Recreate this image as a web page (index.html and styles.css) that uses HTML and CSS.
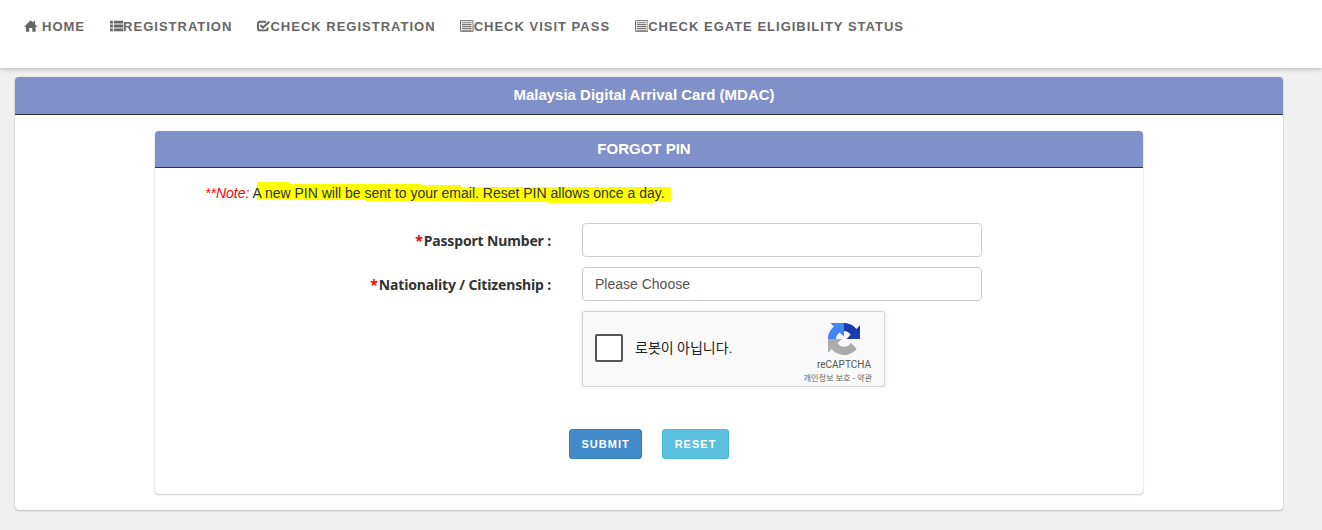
FILE: index.html
```html
<!DOCTYPE html>
<html lang="en">
<head>
    <meta charset="UTF-8">
    <meta name="viewport" content="width=device-width, initial-scale=1.0">
    <title>Malaysia Digital Arrival Card (MDAC)</title>
    <link rel="stylesheet" href="styles.css">
</head>
<body>

<!-- top menu -->
<nav class="top-nav">
    <a class="nav-link nav-home" href="#">
        <svg class="nav-icon" viewBox="0 0 14 14"><path d="M7 1 L9.6 3.5 V1.8 H11.4 V5.2 L14 7.8 H12 V13 H8.6 V9 H5.4 V13 H2 V7.8 H0 Z"/></svg>
        HOME
    </a>
    <a class="nav-link" href="#">
        <svg class="nav-icon" viewBox="0 0 14 14"><path d="M0 1.5h3v3h-3zM4 1.5h10v3h-10zM0 5.5h3v3h-3zM4 5.5h10v3h-10zM0 9.5h3v3h-3zM4 9.5h10v3h-10z"/></svg>
        REGISTRATION
    </a>
    <a class="nav-link" href="#">
        <svg class="nav-icon" viewBox="0 0 14 14"><path d="M11 8.2 V9.5 A2 2 0 0 1 9 11.5 H3 A2 2 0 0 1 1 9.500 V4.500 A2 2 0 0 1 3 2.500 H9.500" fill="none" stroke="#666" stroke-width="2"/><path d="M3.500 6 L6.200 8.700 L12.800 2.500" fill="none" stroke="#666" stroke-width="2.200"/></svg>
        CHECK REGISTRATION
    </a>
    <a class="nav-link" href="#">
        <svg class="nav-icon" viewBox="0 0 14 14"><path d="M.5 1.5h13v11H.5z" fill="none" stroke="#666"/><path d="M2 3h10v1.2H2zM2 5h10v1.2H2zM2 7h10v1.2H2zM2 9h10v1.2H2zM2 10.800h10V12H2z" fill="#777"/></svg>
        CHECK VISIT PASS
    </a>
    <a class="nav-link" href="#">
        <svg class="nav-icon" viewBox="0 0 14 14"><path d="M.5 1.5h13v11H.5z" fill="none" stroke="#666"/><path d="M2 3h10v1.2H2zM2 5h10v1.2H2zM2 7h10v1.2H2zM2 9h10v1.2H2zM2 10.800h10V12H2z" fill="#777"/></svg>
        CHECK EGATE ELIGIBILITY STATUS
    </a>
</nav>

<main class="panel panel-outer">
    <div class="panel-heading heading-main">Malaysia Digital Arrival Card (MDAC)</div>
    <div class="panel-body">

        <section class="panel panel-inner">
            <div class="panel-heading heading-forgot">FORGOT PIN</div>

            <p class="note">
                <!-- highlighter mark behind the note -->
                <svg class="note-mark" viewBox="0 0 520 40" width="520" height="40"><polygon fill="#ffff00" points="102,14 134,14 134,16 186,16 186,16 266,16 266,17 306,17 306,19 516,19 516,34 498,34 498,35 392,35 392,34 306,34 306,33 211,33 211,32 149,32 149,31 111,31 102,31"/></svg>
                <span class="note-text"><em class="note-label">**Note:</em> A new PIN will be sent to your email. Reset PIN allows once a day.</span>
            </p>

            <form class="forgot-form">
                <label class="form-label" for="passportNo"><span class="required">*</span>Passport Number :</label>
                <input id="passportNo" class="form-control" type="text">

                <label class="form-label" for="nationality"><span class="required">*</span>Nationality / Citizenship :</label>
                <select id="nationality" class="form-control">
                    <option>Please Choose</option>
                </select>

                <div class="recaptcha-box">
                    <span class="recaptcha-check"></span>
                    <span class="recaptcha-text">로봇이 아닙니다.</span>
                    <div class="recaptcha-brand">
                        <svg class="recaptcha-logo" viewBox="0 0 64 64">
                            <path fill="#1c3aa9" d="M64 32V4.7l-7.2 7.1C50.9 4.7 42 0 32 0v16c5.5 0 10.4 3 13.2 7.5L37 32z"/>
                            <path fill="#4285f4" d="M32 0H4.7l7.1 7.2C4.7 13.1 0 22 0 32h16c0-5.5 3-10.4 7.5-13.2L32 27z"/>
                            <path fill="#ababab" d="M0 32v27.3l7.2-7.1C13 59.3 22 64 32 64c10.4 0 19.6-5 25.4-12.7L45.7 39.5c-1.2 2.1-2.8 3.9-4.8 5.3-2 1.6-4.9 2.9-8.9 2.9-.5 0-.9 0-1.1-.1-5-.4-9.3-3.2-11.8-7.1L27.4 32z"/>
                        </svg>
                        <span class="recaptcha-name">reCAPTCHA</span>
                        <span class="recaptcha-links">개인정보 보호 - 약관</span>
                    </div>
                </div>
            </form>

            <div class="form-actions">
                <button type="button" class="btn btn-submit">SUBMIT</button>
                <button type="button" class="btn btn-reset">RESET</button>
            </div>
        </section>

    </div>
</main>

</body>
</html>
```

FILE: styles.css
```css
body {
    font-family: "Liberation Sans", Arial, sans-serif;
    background-color: #f0f0f0;
    margin: 0;
    color: #333333;
}

/* top menu */
.top-nav {
    display: flex;
    gap: 24.6px;
    height: 68px;
    box-sizing: border-box;
    padding: 18px 0 0 24px;
    background-color: #ffffff;
    box-shadow: 0 1px 5px rgba(0,0,0,0.25);
}

.nav-link {
    display: flex;
    align-items: center;
    height: 16px;
    font-size: 13px;
    font-weight: bold;
    letter-spacing: 1px;
    color: #666666;
    text-decoration: none;
    white-space: nowrap;
}

.nav-icon {
    width: 13.5px;
    height: 14px;
    fill: #666666;
}

.nav-home .nav-icon {
    margin-right: 4.5px;
}

/* panels */
.panel {
    background-color: #ffffff;
    border-radius: 4px;
    box-shadow: 0 1px 2px rgba(0,0,0,0.2), 0 0 1px rgba(0,0,0,0.3);
    box-sizing: border-box;
}

.panel-outer {
    margin: 9px 39px 20px 15px;
    height: 433px;
}

.panel-inner {
    width: 988px;
    height: 363px;
    margin-left: 140px;
}

.panel-heading {
    background-color: #8090c9;
    color: #ffffff;
    font-size: 15px;
    font-weight: bold;
    text-align: center;
    padding-right: 10px;
    border-bottom: 1px solid #333333;
    border-radius: 4px 4px 0 0;
    box-sizing: border-box;
}

.heading-main {
    height: 38px;
    line-height: 36px;
}

.heading-forgot {
    height: 37px;
    line-height: 35px;
}

.panel-body {
    padding-top: 16px;
}

/* note */
.note {
    position: relative;
    margin: 0;
    height: 55px;
    padding-left: 50px;
    font-size: 14px;
    line-height: 50px;
    box-sizing: border-box;
}

.note-mark {
    position: absolute;
    left: 0;
    top: 0;
}

.note-text {
    position: relative;
}

.note-label {
    color: #ff0000;
}

/* form */
.forgot-form {
    display: grid;
    grid-template-columns: 396px 400px;
    column-gap: 31px;
    row-gap: 10px;
    align-items: center;
}

.form-label {
    font-family: "Noto Sans", sans-serif;
    font-size: 14px;
    font-weight: bold;
    letter-spacing: -0.15px;
    text-align: right;
    color: #333333;
}

.required {
    color: #ff0000;
    margin-right: 1px;
}

.form-control {
    height: 34px;
    width: 400px;
    box-sizing: border-box;
    padding: 0 12px;
    border: 1px solid #cccccc;
    border-radius: 4px;
    background-color: #ffffff;
    font-family: "Liberation Sans", Arial, sans-serif;
    font-size: 14px;
    color: #555555;
    appearance: none;
}

/* recaptcha */
.recaptcha-box {
    grid-column: 2;
    display: flex;
    align-items: center;
    width: 303px;
    height: 76px;
    box-sizing: border-box;
    padding: 0 12px 2px;
    background-color: #f9f9f9;
    border: 1px solid #d3d3d3;
    border-radius: 3px;
    box-shadow: 0 0 4px 1px rgba(0,0,0,0.08);
}

.recaptcha-check {
    width: 28px;
    height: 28px;
    box-sizing: border-box;
    border: 2px solid #555555;
    border-radius: 2px;
    background-color: #ffffff;
}

.recaptcha-text {
    margin: 0 0 2px 12px;
    font-family: Roboto, "Noto Sans CJK KR", sans-serif;
    font-size: 14px;
    color: #222222;
}

.recaptcha-brand {
    display: flex;
    flex-direction: column;
    align-items: flex-end;
    margin-left: auto;
    width: 70px;
    padding-top: 10px;
}

.recaptcha-logo {
    width: 32px;
    height: 32px;
    margin-right: 12px;
}

.recaptcha-name {
    margin: 3px 1px 0 0;
    font-family: Roboto, sans-serif;
    font-size: 10px;
    line-height: 14px;
    color: #555555;
}

.recaptcha-links {
    font-family: Roboto, "Noto Sans CJK KR", sans-serif;
    font-size: 8.2px;
    line-height: 12px;
    color: #666666;
    white-space: nowrap;
}

/* buttons */
.form-actions {
    display: flex;
    gap: 20px;
    margin: 42px 0 0 414px;
}

.btn {
    height: 30px;
    padding: 0 11.5px;
    border: 1px solid transparent;
    border-radius: 3px;
    font-family: "Liberation Sans", Arial, sans-serif;
    font-size: 11px;
    font-weight: bold;
    letter-spacing: 1px;
    color: #ffffff;
}

.btn-submit {
    background-color: #428bca;
    border-color: #357ebd;
}

.btn-reset {
    background-color: #5bc0de;
    border-color: #46b8da;
}
```
